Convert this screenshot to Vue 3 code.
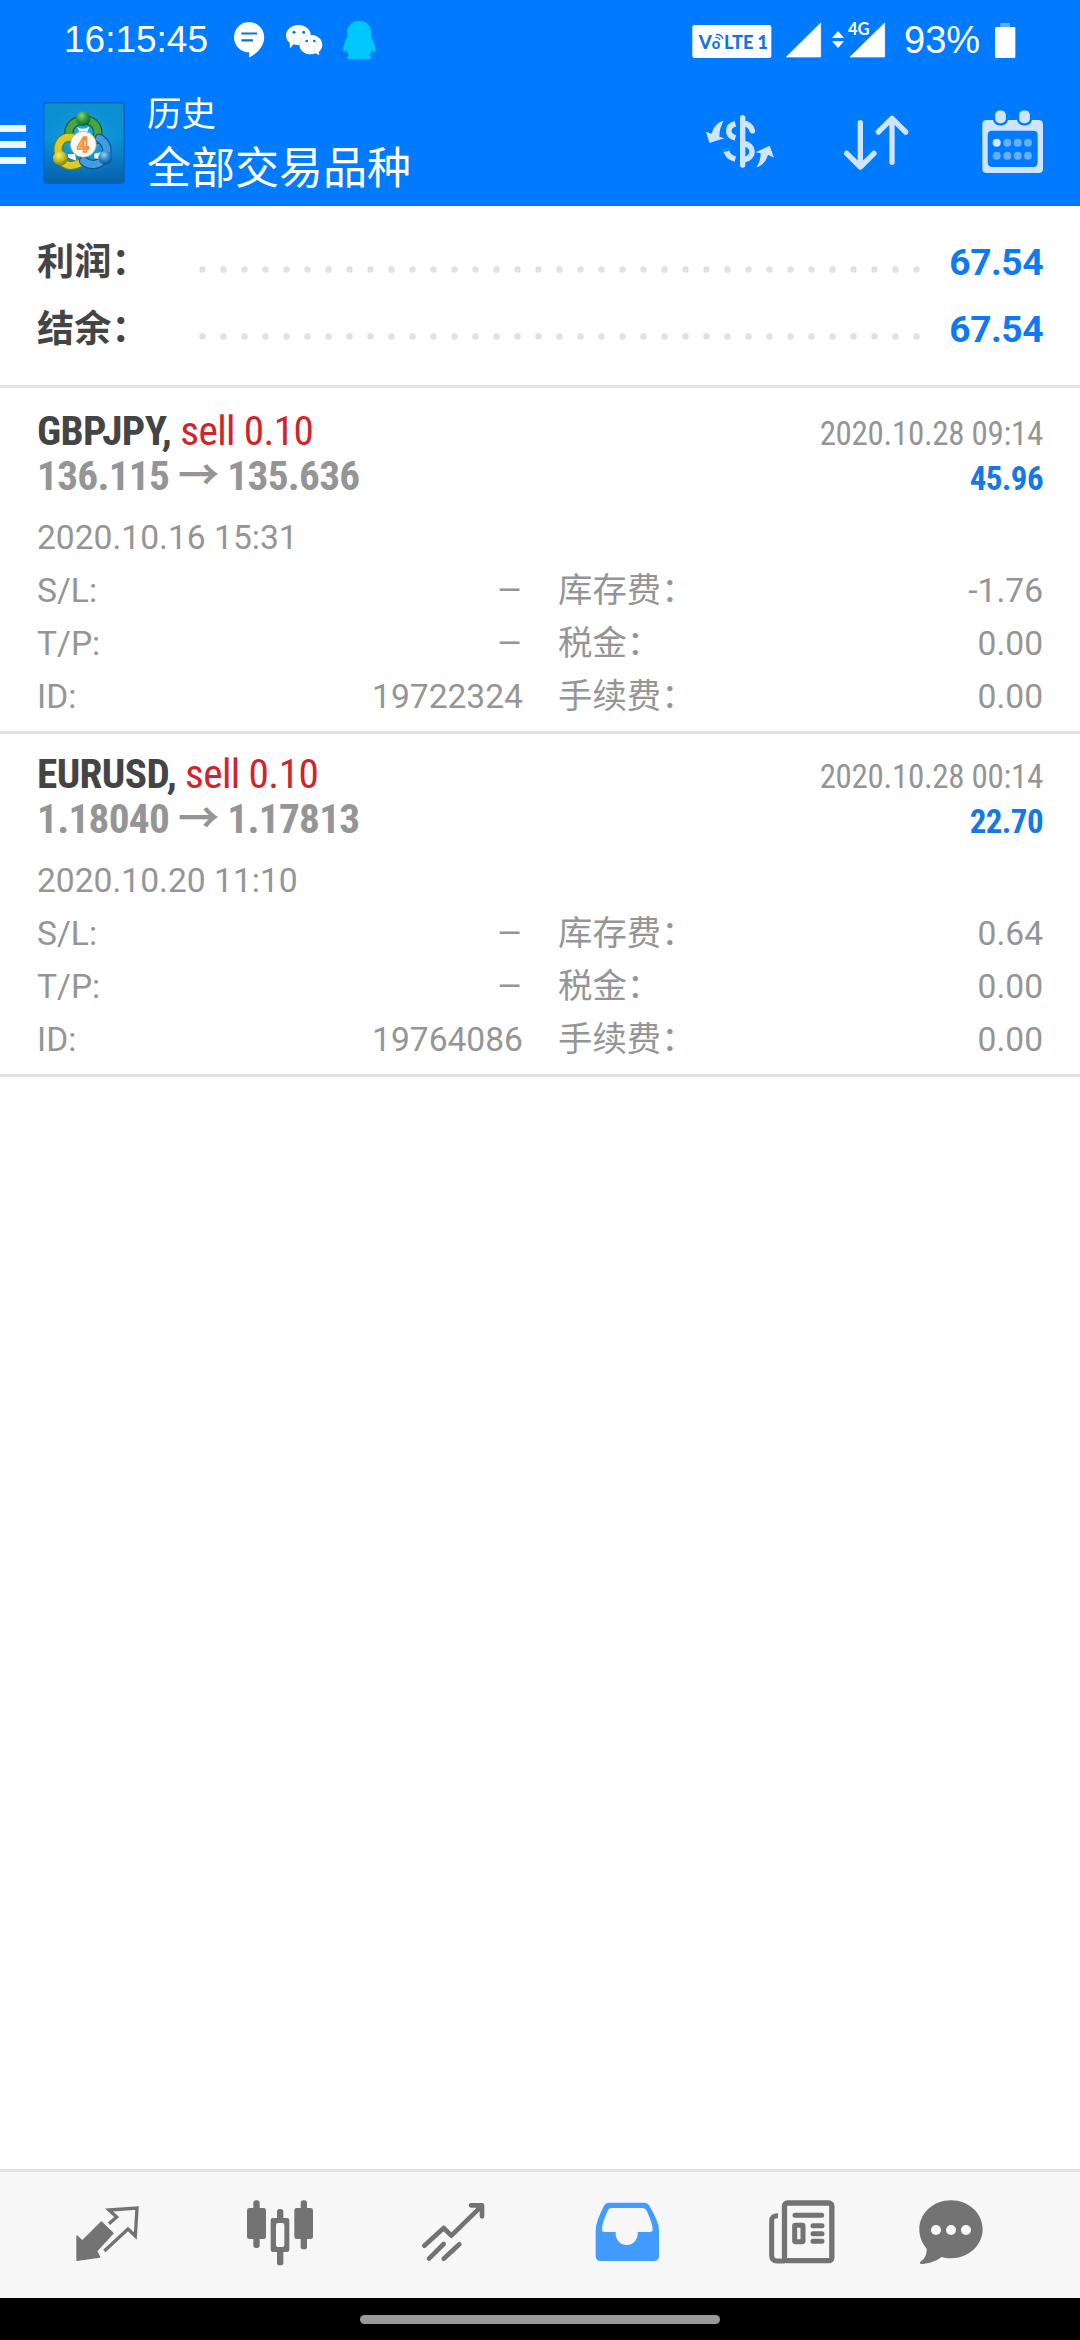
<script setup>
const summary = [
  { label: '利润：', value: '67.54' },
  { label: '结余：', value: '67.54' },
]

const deals = [
  {
    symbol: 'GBPJPY,', side: 'sell 0.10', closed: '2020.10.28 09:14',
    open: '136.115', close: '135.636', profit: '45.96', opened: '2020.10.16 15:31',
    rows: [
      ['S/L:', '–', '库存费：', '-1.76'],
      ['T/P:', '–', '税金：', '0.00'],
      ['ID:', '19722324', '手续费：', '0.00'],
    ],
  },
  {
    symbol: 'EURUSD,', side: 'sell 0.10', closed: '2020.10.28 00:14',
    open: '1.18040', close: '1.17813', profit: '22.70', opened: '2020.10.20 11:10',
    rows: [
      ['S/L:', '–', '库存费：', '0.64'],
      ['T/P:', '–', '税金：', '0.00'],
      ['ID:', '19764086', '手续费：', '0.00'],
    ],
  },
]
</script>

<template>
  <div class="screen">
    <header class="top">
      <div class="status">
        <span class="clock">16:15:45</span>
        <svg class="st-left" viewBox="690 54 450 132" width="150" height="44">
          <path fill="#fff" d="M747 66a45.500 45.500 0 0 1 45.500 45.500c0 28-22 49-45 61v-15.500a45.500 45.500 0 0 1 0-91z" />
          <path stroke="#0a6fe0" stroke-width="6.500" d="M724 100.500h47M724 121h35" />
          <path fill="#fff" d="M895 75c21 0 37 14 37 29-18 0-34 13-34 31h-6c-4 0-8-1-11-2l-11 12-1-17c-7-5-11-13-11-22 0-17 17-31 37-31z" />
          <path fill="#fff" d="M932 104c19 0 35 13 35 30 0 9-5 17-11 22l2 10-11-6c-5 2-10 3-15 3-19 0-34-13-34-29s15-30 34-30z" />
          <g fill="#0a6fe0"><circle cx="882" cy="97" r="4.500" /><circle cx="911" cy="97" r="4.500" /><circle cx="920" cy="123" r="4" /><circle cx="943" cy="123" r="4" /></g>
          <path fill="#00c8ff" d="M1078 62c22 0 36 17 36 37v12c6 12 12 26 12 41 0 8-6 5-10-3-2 8-5 13-8 17 7 4 7 11-1 12h-22c-4 0-4-2-7-2s-4 2-8 2h-22c-8-1-8-8-1-12-3-4-6-9-8-17-4 8-9 11-9 3 0-15 5-29 11-41v-12c0-20 15-37 37-37z" />
        </svg>
        <svg class="st-right" viewBox="93 54 588 132" width="196" height="44">
          <rect x="97" y="75" width="237" height="99" rx="7" fill="#fff" />
          <g fill="#1673e0" font-family="Lato, sans-serif" font-weight="900">
            <text x="116" y="147" font-size="56">V</text>
            <text x="155" y="147" font-size="44">o</text>
            <text x="192" y="147" font-size="56" textLength="88" lengthAdjust="spacingAndGlyphs">LTE</text>
            <text x="292" y="147" font-size="56">1</text>
          </g>
          <path fill="none" stroke="#1673e0" stroke-width="4" d="M166 113q9-3 14 7M168 104q15-3 21 13" />
          <path fill="#fff" d="M482 69v102H379z" stroke="#fff" stroke-linejoin="round" stroke-width="2" />
          <path fill="#fff" d="M674 69v102H570z" stroke="#fff" stroke-linejoin="round" stroke-width="2" />
          <path fill="#fff" d="M516 114l18-21 18 21zM516 124h36l-18 20z" />
          <path fill="#007aff" d="M560 62h70v38l-9 9h-61z" />
          <text x="564" y="105" fill="#fff" font-family="Lato, sans-serif" font-weight="700" font-size="49" textLength="65" lengthAdjust="spacingAndGlyphs">4G</text>
        </svg>
        <span class="percent">93%</span>
        <svg viewBox="1002 60 66 116" width="22" height="38.670">
          <path fill="#66afff" d="M1021 66h29v13h-29z" />
          <rect x="1005" y="78" width="61" height="93" rx="3" fill="#fff" />
        </svg>
      </div>
      <div class="bar">
        <div class="burger"><i /><i /><i /></div>
        <svg class="logo" viewBox="130 305 246 246" width="82" height="82">
          <defs>
            <linearGradient id="tile" x1="0" y1="0" x2="0" y2="1"><stop offset="0" stop-color="#0d8fd0" /><stop offset=".45" stop-color="#0a90d8" /><stop offset="1" stop-color="#0760a8" /></linearGradient>
            <radialGradient id="glow" cx=".5" cy=".45" r=".5"><stop offset="0" stop-color="#27c4ee" /><stop offset="1" stop-color="#0d8fd0" stop-opacity="0" /></radialGradient>
            <radialGradient id="gr" cx=".4" cy=".3" r=".75"><stop offset="0" stop-color="#8fd07a" /><stop offset=".5" stop-color="#2f9a3c" /><stop offset="1" stop-color="#0d5a26" /></radialGradient>
            <radialGradient id="ye" cx=".4" cy=".3" r=".75"><stop offset="0" stop-color="#f3ee7a" /><stop offset=".5" stop-color="#c9bd1e" /><stop offset="1" stop-color="#6d7412" /></radialGradient>
            <radialGradient id="bl" cx=".4" cy=".3" r=".75"><stop offset="0" stop-color="#8fd4f8" /><stop offset=".5" stop-color="#2a86cc" /><stop offset="1" stop-color="#0b4482" /></radialGradient>
          </defs>
          <rect x="132" y="307" width="242" height="242" rx="9" fill="url(#tile)" stroke="#0b62c4" stroke-width="5" />
          <rect x="140" y="315" width="226" height="226" fill="url(#glow)" />
          <g fill="none" stroke-linecap="round">
            <path stroke="#11612b" stroke-width="29" d="M211 412c-10-25 5-51 40-53 40 0 50 31 39 58" />
            <path stroke="#4aa644" stroke-width="21" d="M211 412c-10-25 5-51 40-53 40 0 50 31 39 58" />
            <path stroke="#6f7f1a" stroke-width="29" d="M215 411c-30-3-45 20-38 52 10 33 36 38 60 27" />
            <path stroke="#d8cc2c" stroke-width="21" d="M215 411c-30-3-45 20-38 52 10 33 36 38 60 27" />
            <path stroke="#125796" stroke-width="29" d="M299 414c22 12 30 39 15 60-18 25-45 22-62 8" />
            <path stroke="#409ddf" stroke-width="21" d="M299 414c22 12 30 39 15 60-18 25-45 22-62 8" />
          </g>
          <path fill="#fff" d="M232 380q20 12 38-2l-9 20h-20zM204 462l22-1 4 20-23-9zM284 460l21-4-3 20-18-2z" />
          <circle cx="250" cy="355" r="22" fill="url(#gr)" />
          <circle cx="182" cy="474" r="22" fill="url(#ye)" />
          <circle cx="317" cy="472" r="21" fill="url(#bl)" />
          <circle cx="251" cy="432" r="39" fill="#fbf7f2" stroke="#8e9da0" stroke-width="2" />
          <text x="250" y="454" text-anchor="middle" font-family="Roboto, sans-serif" font-weight="700" font-size="62" fill="#fff" stroke="#ef9138" stroke-width="5">4</text>
        </svg>
        <div class="titles">
          <div class="sub">历史</div>
          <div class="main">全部交易品种</div>
        </div>
        <div class="actions">
          <svg viewBox="132 324 216 216" width="72" height="72">
            <g fill="#cfe5ff">
              <rect x="240" y="345" width="16" height="158" rx="8" />
              <path d="M191 362c-17 4-30 17-36 39l-17-6 10 34 45-14-15-5c0-16 4-32 13-48z" />
              <path d="M289 502c17-5 30-19 35-38l18 9-13-36-42 20 15 3c0 16-4 29-13 42z" />
            </g>
            <g fill="none" stroke="#cfe5ff" stroke-width="17">
              <path d="M226 371c-26 7-27 35 0 43" />
              <path d="M226 477c-14-3-23-11-26-23" /><circle cx="200" cy="455" r=".5" stroke-linecap="round" />
              <path d="M250 370c16 1 23 8 27 22" stroke-linecap="round" />
              <path d="M250 430c34 5 35 43 2 49" />
            </g>
          </svg>
          <svg viewBox="540 324 216 216" width="72" height="72" fill="none" stroke="#cfe5ff" stroke-width="16" stroke-linecap="round" stroke-linejoin="round">
            <path d="M601 368v132M560 460l41 41 41-41M696 487V356M655 396l41-41 41 41" />
          </svg>
          <svg viewBox="948 324 216 216" width="72" height="72">
            <path fill="#cfe5ff" fill-rule="evenodd" d="M980 360h156q13 0 13 13v133q0 13-13 13H980q-13 0-13-13V373q0-13 13-13zM996 392q-13 0-13 13v82q0 14 13 14h124q13 0 13-14v-82q0-13-13-13z" />
            <g fill="#cfe5ff" stroke="#007aff" stroke-width="7"><rect x="1002" y="328" width="39" height="45" rx="17" /><rect x="1074" y="328" width="39" height="45" rx="17" /></g>
            <circle cx="1010" cy="428" r="12" fill="#d6e9ff" />
            <g fill="#66afff"><circle cx="1042" cy="428" r="12" /><circle cx="1073" cy="428" r="12" /><circle cx="1104" cy="428" r="12" /><circle cx="1010" cy="467" r="12" /><circle cx="1042" cy="467" r="12" /><circle cx="1073" cy="467" r="12" /><circle cx="1104" cy="467" r="12" /></g>
          </svg>
        </div>
      </div>
    </header>

    <section class="summary">
      <div v-for="s in summary" :key="s.label" class="sum-row">
        <span class="sum-label">{{ s.label }}</span>
        <span class="dots" />
        <span class="sum-value">{{ s.value }}</span>
      </div>
    </section>

    <main class="list">
      <article v-for="d in deals" :key="d.symbol" class="deal">
        <div class="line">
          <span class="cond big"><b>{{ d.symbol }}</b> <span class="sell">{{ d.side }}</span></span>
          <span class="cond date">{{ d.closed }}</span>
        </div>
        <div class="line">
          <span class="cond big price">{{ d.open }} <span class="arrow">→</span> {{ d.close }}</span>
          <span class="cond profit">{{ d.profit }}</span>
        </div>
        <div class="opened">{{ d.opened }}</div>
        <div v-for="r in d.rows" :key="r[0]" class="cells">
          <span>{{ r[0] }}</span><span class="num" :class="{ dash: r[1] === '–' }">{{ r[1] }}</span>
          <span class="fee">{{ r[2] }}</span><span class="num">{{ r[3] }}</span>
        </div>
      </article>
    </main>

    <nav class="tabs">
      <svg viewBox="216 141 216 216" width="72" height="72">
        <path fill="#737373" stroke="#737373" stroke-width="4" stroke-linejoin="round" d="M304 216l35 34-49 53 9 18-68 10 0-73 16 15z" />
        <path fill="none" stroke="#737373" stroke-width="10" d="M327 221l23-20-23-21 84-6-5 84-22-21-71 66" />
      </svg>
      <svg viewBox="732 141 216 216" width="72" height="72" fill="#737373">
        <rect x="760" y="151" width="19" height="143" rx="8" /><rect x="741" y="174" width="57" height="93" rx="7" />
        <rect x="902" y="151" width="19" height="147" rx="8" /><rect x="883" y="174" width="56" height="93" rx="7" />
        <rect x="831" y="177" width="19" height="40" rx="8" /><rect x="831" y="295" width="19" height="51" rx="8" />
        <path fill-rule="evenodd" d="M819 204h42q7 0 7 7v88q0 7-7 7h-42q-7 0-7-7v-88q0-7 7-7zM834 219q-6 0-6 6v60q0 6 6 6h13q6 0 6-6v-60q0-6-6-6z" />
      </svg>
      <svg viewBox="174 141 216 216" width="72" height="72" fill="none" stroke="#737373" stroke-width="14" stroke-linecap="round" stroke-linejoin="round">
        <path d="M193 287l58-53 23 23 86-84M333 166h33v33M207 326l44-44M251 326l47-43" />
      </svg>
      <svg viewBox="693 141 216 216" width="72" height="72">
        <path fill="#429bff" fill-rule="evenodd" d="M747 158h106q10 0 15 9 29 48 29 74v77q0 15-15 15H722q-15 0-15-15v-77q0-26 25-74 5-9 15-9zM755 174q-8 0-11 7-18 38-18 57 0 8 8 8h33v6a33 33 0 0 0 66 0v-6h37q8 0 8-8 0-18-18-56-4-8-12-8z" />
      </svg>
      <svg viewBox="138 141 216 216" width="72" height="72" fill="none" stroke="#737373" stroke-linecap="round">
        <rect x="193.500" y="159" width="142" height="173" rx="9" stroke-width="16" />
        <path stroke-width="15" stroke-linecap="butt" d="M174 197q-19-1-19 16v103q0 17 17 17h23" />
        <path stroke-width="15" d="M225 196h80M279 227h27M279 251h27M279 274h27" />
        <rect x="224" y="226" width="25" height="49" rx="2" stroke-width="15" />
      </svg>
      <svg viewBox="585 141 216 216" width="72" height="72">
        <path fill="#737373" d="M693 151c53 0 95 39 95 87s-42 87-95 87c-10 0-20-2-29-4-15 12-36 20-59 21-6 0-7-5-2-8 12-8 18-23 17-38-14-16-22-36-22-58 0-48 42-87 95-87z" />
        <g fill="#f9f9f9"><circle cx="648" cy="240" r="15" /><circle cx="693" cy="240" r="15" /><circle cx="738" cy="240" r="15" /></g>
      </svg>
    </nav>
    <div class="gesture"><i /></div>
  </div>
</template>

<style>
body { margin: 0; background: #fff; }
</style>

<style scoped>
.screen {
  width: 1080px; height: 2340px; display: flex; flex-direction: column; overflow: hidden;
  background: #fff; font-family: Roboto, "Noto Sans CJK SC", sans-serif; color: #959596;
}
svg { display: block; flex: none; }
.top { height: 206px; background: #007aff; color: #fff; box-sizing: border-box; border-bottom: 1px solid #0a6fd8; }
.status { display: flex; height: 80px; align-items: center; font: 37px/80px "Liberation Sans", sans-serif; }
.clock { width: 166px; padding-left: 64px; }
.st-right { margin-left: 311px; }
.percent { width: 80px; margin-left: 17px; margin-right: 10px; flex: none; font-size: 38px; }
.bar { display: flex; height: 125px; }
.burger { width: 26px; margin-top: 45px; display: flex; flex-direction: column; gap: 9px; }
.burger i { height: 7px; background: #e9f7ff; }
.logo { margin: 22px 0 0 17px; }
.titles { margin-left: 22px; flex: 1; }
.sub { font-size: 34.400px; line-height: 50px; margin-top: 9px; }
.main { font-size: 44px; line-height: 60px; }
.actions { display: flex; gap: 64px; padding: 28px 32px 0 0; }

.summary { padding: 23px 37px 22px; height: 134px; border-bottom: 3px solid #e3e3e3; }
.sum-row { display: flex; height: 67px; line-height: 67px; font-size: 37.200px; font-weight: 700; align-items: center; }
.sum-label { width: 155px; color: #444; }
.dots { width: 735px; height: 21px; margin-top: 14px; background: radial-gradient(circle at center, #e2e2e2 0 2.800px, transparent 3.800px) 0 0 / 21px 21px; }
.sum-value { flex: 1; text-align: right; color: #0f7af0; letter-spacing: -.5px; }

.list { flex: 1; }
.deal { height: 322px; padding: 18px 37px 0; border-bottom: 3px solid #e3e3e3; }
.deal:first-child { padding-top: 21px; }
.line { display: flex; justify-content: space-between; align-items: baseline; line-height: 45px; height: 45px; white-space: pre; }
.cond { font-family: "Roboto Condensed", Roboto, "Noto Sans CJK SC", sans-serif; font-stretch: 75%; }
.big { font-size: 41.250px; letter-spacing: -.6px; }
.big b { color: #444; }
.sell { color: #d0232b; }
.price { font-weight: 700; letter-spacing: -.7px; }
.arrow { font-family: "Noto Sans CJK SC", sans-serif; font-weight: 700; line-height: 0; }
.date { font-size: 33px; letter-spacing: -.3px; }
.profit { font-size: 33px; font-weight: 700; color: #1578e6; letter-spacing: -.6px; }
.opened, .cells { font-size: 33.600px; line-height: 53px; height: 53px; }
.opened { margin-top: 12px; }
.cells { display: grid; grid-template-columns: 200px 286px 200px 1fr; }
.num { text-align: right; }
.dash { transform: scaleX(1.2); transform-origin: right; }
.fee { padding-left: 35px; font-size: 34.400px; }

.tabs { height: 101px; padding: 25px 0 0 72px; border-top: 3px solid #e3e3e3; background: #f7f7f7; display: grid; grid-template-columns: 172px 174px 173px 175px 149px 72px; }
.gesture { height: 42px; background: #000; display: flex; justify-content: center; }
.gesture i { width: 360px; height: 9px; margin-top: 17px; border-radius: 5px; background: #999; }
</style>
